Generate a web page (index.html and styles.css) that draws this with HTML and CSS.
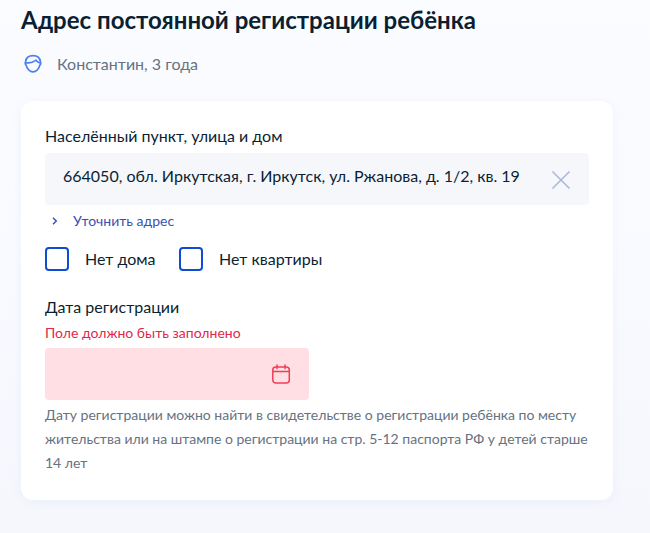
FILE: index.html
```html
<!DOCTYPE html>
<html lang="ru">
<head>
<meta charset="utf-8">
<title>Адрес постоянной регистрации ребёнка</title>
<link rel="stylesheet" href="styles.css">
</head>
<body>
<main class="page">
  <h1 class="title">Адрес постоянной регистрации ребёнка</h1>
  <div class="child">
    <svg class="child-icon" width="20" height="20" viewBox="0 0 20 20" fill="none" stroke="#4d80ee" stroke-width="1.7" stroke-linecap="round" stroke-linejoin="round"><path d="M2.700 7.500C3 3.800 6 1.600 10 1.600s7 2.200 7.300 5.900c.7.700.6 3-.4 3.500C16 14.800 13.200 17.800 10 17.800S4 14.800 3.100 11C2.100 10.500 2 8.200 2.700 7.500Z"/><path d="M3.500 8.800C7 9.200 10.500 8.200 13 6.200 14 7.500 15 8.300 16.500 8.800"/></svg>
    <span class="child-name">Константин, 3 года</span>
  </div>
  <section class="card">
    <label class="label">Населённый пункт, улица и дом</label>
    <div class="address">
      <span class="address-text">664050, обл. Иркутская, г. Иркутск, ул. Ржанова, д. 1/2, кв. 19</span>
      <svg class="clear" width="20" height="20" viewBox="0 0 20 20" fill="none" stroke="#aab6d6" stroke-width="1.500"><path d="M1.500 1.500 18.500 18.500M18.500 1.500 1.500 18.500"/></svg>
    </div>
    <a class="refine">
      <svg width="6" height="8" viewBox="0 0 6 8" fill="none" stroke="#2d50b8" stroke-width="1.400"><path d="M1 .8 4.300 4 1 7.200"/></svg>
      <span>Уточнить адрес</span>
    </a>
    <div class="checks">
      <div class="check"><span class="box"></span><span>Нет дома</span></div>
      <div class="check"><span class="box"></span><span>Нет квартиры</span></div>
    </div>
    <label class="label date-label">Дата регистрации</label>
    <div class="error">Поле должно быть заполнено</div>
    <div class="date">
      <svg width="20" height="20" viewBox="0 0 20 20" fill="none" stroke="#ee3f58" stroke-width="1.500" stroke-linecap="round" stroke-linejoin="round"><rect x="1.800" y="3" width="16.500" height="16" rx="3"/><path d="M2 7.500H18M6 1V4.500M14 1V4.500"/></svg>
    </div>
    <p class="hint">Дату регистрации можно найти в свидетельстве о регистрации ребёнка по месту жительства или на штампе о регистрации на стр. 5-12 паспорта РФ у детей старше 14 лет</p>
  </section>
</main>
</body>
</html>
```
FILE: styles.css
```css
* { box-sizing: border-box; }
html, body { margin: 0; height: 100%; }
body {
  background: linear-gradient(180deg, #fbfcff 0%, #f9faff 45%, #f5f7fc 100%);
  font-family: "Lato", "Noto Sans", sans-serif;
  color: #0b1f33;
  overflow: hidden;
}
.page { padding: 4px 37px 0 21px; }
.title {
  margin: 0;
  font-size: 24px;
  line-height: 32px;
  font-weight: 700;
  color: #0b1f33;
}
.child {
  display: flex;
  align-items: center;
  gap: 14px;
  margin-top: 18px;
  height: 20px;
  padding-left: 2px;
}
.child-name { font-size: 16px; line-height: 20px; color: #66727f; }
.card {
  margin-top: 27px;
  background: #fff;
  border-radius: 12px;
  box-shadow: 0 2px 12px rgba(190, 200, 240, .16);
  padding: 23px 24px 24px;
  height: 399px;
}
.label { display: block; font-size: 16px; line-height: 24px; color: #0b1f33; }
.address {
  display: flex;
  align-items: center;
  justify-content: space-between;
  height: 52px;
  margin-top: 5px;
  padding: 0 18px;
  background: #f5f7fb;
  border-radius: 4px;
}
.address-text { font-size: 16px; line-height: 24px; margin-top: -6px; }
.clear { margin-top: 1px; }
.refine {
  display: flex;
  align-items: center;
  gap: 15px;
  margin-top: 7px;
  padding-left: 7px;
  font-size: 14px;
  line-height: 18px;
  color: #3e4fb0;
}
.checks { display: flex; gap: 23.5px; margin-top: 17px; }
.check { display: flex; align-items: center; gap: 16px; font-size: 16px; line-height: 24px; }
.box { width: 24px; height: 24px; border: 2px solid #0d4cd3; border-radius: 4px; background: #fff; }
.date-label { margin-top: 24px; }
.error { margin-top: 5px; font-size: 14px; line-height: 18px; color: #e1284b; }
.date {
  display: flex;
  align-items: center;
  justify-content: flex-end;
  width: 264px;
  height: 52px;
  margin-top: 6px;
  padding: 0 18px;
  background: #ffdfe3;
  border-radius: 4px;
}
.hint { margin: 3px 0 0; font-size: 14px; line-height: 24px; color: #66727f; }
```
